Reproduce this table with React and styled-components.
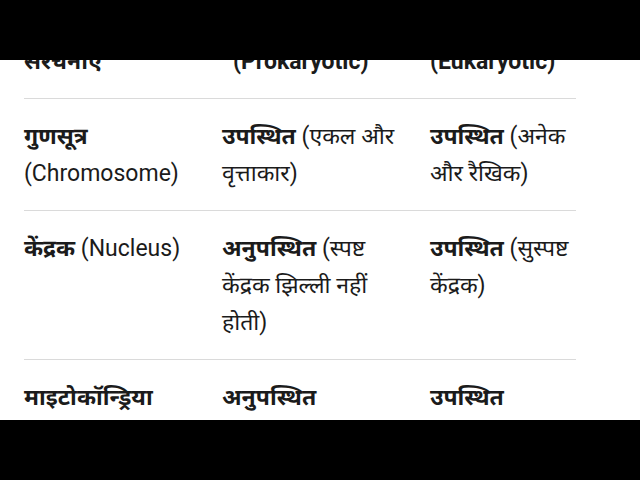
import React from "react";
import styled, { createGlobalStyle } from "styled-components";

const Global = createGlobalStyle`
  html, body { margin: 0; padding: 0; background: #000; }
  body { width: 640px; height: 480px; overflow: hidden; }
`;

const Screen = styled.div`
  width: 640px;
  height: 480px;
  display: flex;
  flex-direction: column;
  background: #000;
`;

const Letterbox = styled.div`
  height: ${(p) => p.$h}px;
  flex: none;
  background: #000;
`;

const Viewport = styled.div`
  flex: 1;
  background: #fff;
  overflow: hidden;
  padding: 0 64px 0 24px;
`;

const Table = styled.div`
  margin-top: ${(p) => -p.$scroll}px;
  display: grid;
  grid-template-columns: 198px 208px 146px;
  font-family: Roboto, "Noto Sans Devanagari", "Noto Sans", "Liberation Sans", sans-serif;
  font-size: 23px;
  line-height: 37px;
  color: #1b1b1b;
`;

const Cell = styled.div`
  padding: 19px 0 18px 0;
  border-bottom: 1px solid #dadada;
  font-weight: ${(p) => (p.$head ? 700 : 400)};
  white-space: nowrap;
`;

const B = styled.b`
  font-weight: 700;
`;

const Indent = styled.span`
  padding-left: 11px;
`;

const rows = [
  [
    [<B key="a">गुणसूत्र</B>, <br key="b" />, "(Chromosome)"],
    [<B key="a">उपस्थित</B>, " (एकल और", <br key="b" />, "वृत्ताकार)"],
    [<B key="a">उपस्थित</B>, " (अनेक", <br key="b" />, "और रैखिक)"],
  ],
  [
    [<B key="a">केंद्रक</B>, " (Nucleus)"],
    [<B key="a">अनुपस्थित</B>, " (स्पष्ट", <br key="b" />, "केंद्रक झिल्ली नहीं", <br key="c" />, "होती)"],
    [<B key="a">उपस्थित</B>, " (सुस्पष्ट", <br key="b" />, "केंद्रक)"],
  ],
  [
    [<B key="a">माइटोकॉन्ड्रिया</B>],
    [<B key="a">अनुपस्थित</B>],
    [<B key="a">उपस्थित</B>],
  ],
];

export default function App() {
  return (
    <>
      <Global />
      <Screen>
        <Letterbox $h={60} />
        <Viewport>
          <Table $scroll={73}>
            <Cell $head>
              कोशिकीय
              <br />
              संरचनाएं
            </Cell>
            <Cell $head>
              प्रोकैरियोटिक कोशिका
              <br />
              <Indent>(Prokaryotic)</Indent>
            </Cell>
            <Cell $head>
              यूकैरियोटिक कोशिका
              <br />
              (Eukaryotic)
            </Cell>
            {rows.map((r, i) =>
              r.map((c, j) => <Cell key={`${i}-${j}`}>{c}</Cell>)
            )}
          </Table>
        </Viewport>
        <Letterbox $h={60} />
      </Screen>
    </>
  );
}
